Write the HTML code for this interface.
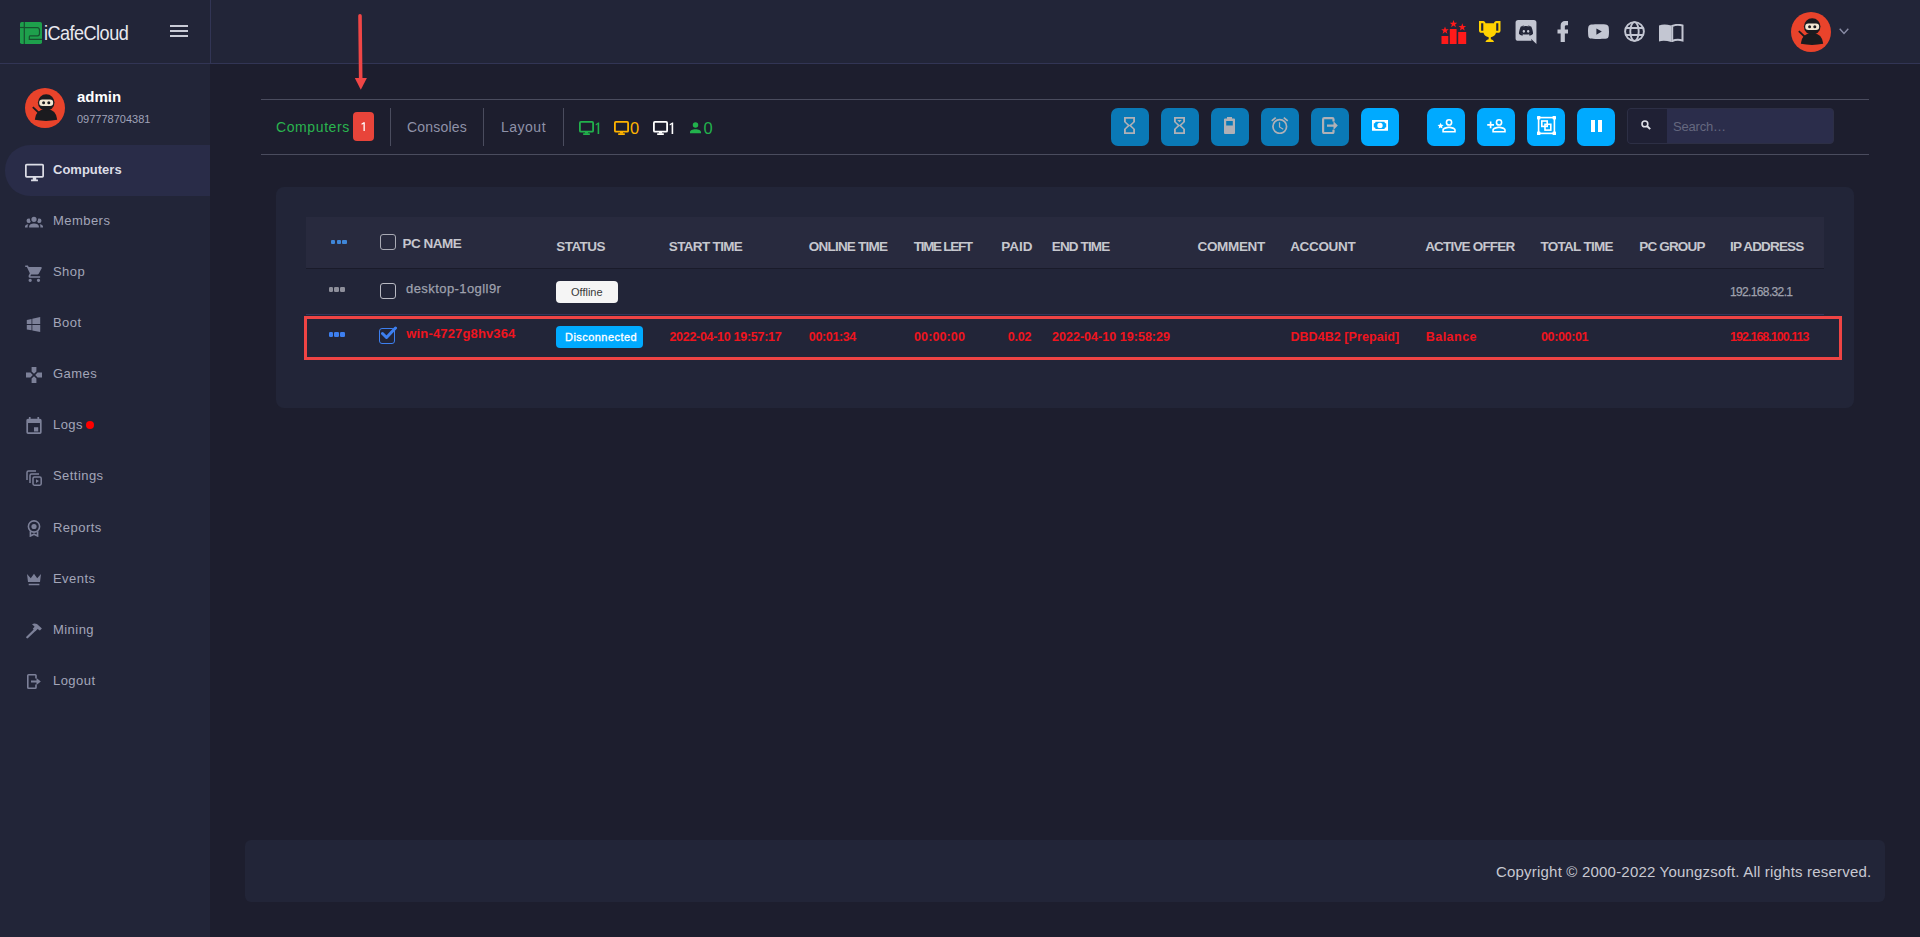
<!DOCTYPE html>
<html><head><meta charset="utf-8">
<style>
*{margin:0;padding:0;box-sizing:border-box}
html,body{width:1920px;height:937px;overflow:hidden;background:#1d1e2e;font-family:"Liberation Sans",sans-serif}
.a{position:absolute}
.t{position:absolute;white-space:nowrap;line-height:1}
#hdr{left:0;top:0;width:1920px;height:64px;background:#222538;border-bottom:1px solid #323555}
#side{left:0;top:64px;width:210px;height:873px;background:#222538}
#vline{left:210px;top:0;width:1px;height:64px;background:#323555}
.mi{left:53px;font-size:13px;color:#a3a6b9;letter-spacing:0.45px}
</style></head><body>
<div id="hdr" class="a"></div>
<div id="vline" class="a"></div>
<div id="side" class="a"></div>
<!-- logo -->
<svg class="a" style="left:20px;top:22px" width="22" height="22" viewBox="0 0 22 22">
<rect x="0" y="0" width="22" height="22" rx="1.8" fill="#1ea04c"/>
<g fill="none" stroke="#17502f" stroke-width="1.2">
<path d="M4.3,0V22"/><path d="M0,5.5H4.3"/>
<path d="M4.3,5.6H17.5Q19.5,5.6 19.5,8.5V11.5Q19.5,13.8 17.5,13.8H10Q9.3,13.8 9.3,15V17.4H22"/>
</g></svg>
<div class="t" style="left:44px;top:22px;font-size:21px;color:#e9e9ef;letter-spacing:-0.6px;transform:scaleX(0.86);transform-origin:left">iCafeCloud</div>
<!-- hamburger -->
<div class="a" style="left:170px;top:25.1px;width:18px;height:1.6px;background:#c9cbd6"></div>
<div class="a" style="left:170px;top:30.1px;width:18px;height:1.6px;background:#c9cbd6"></div>
<div class="a" style="left:170px;top:35.1px;width:18px;height:1.6px;background:#c9cbd6"></div>

<!-- admin avatar -->
<svg class="a" style="left:25px;top:88px" width="40" height="40" viewBox="0 0 40 40">
<circle cx="20" cy="20" r="20" fill="#e9432b"/>
<path d="M9.8,31.8 Q10.5,21.5 21.2,21 Q31.5,21.5 32.2,31.8 Q21,34 9.8,31.8Z" fill="#1b1b1f"/>
<circle cx="21.2" cy="14.5" r="8.3" fill="#1b1b1f"/>
<rect x="14.2" y="11.6" width="14" height="6.4" rx="3.2" fill="#f1e6d2"/>
<circle cx="18.6" cy="14.8" r="1.5" fill="#1b1b1f"/><circle cx="23.8" cy="14.8" r="1.5" fill="#1b1b1f"/>
<path d="M7.8,19.2 L13.5,24.5" stroke="#1b1b1f" stroke-width="1.8"/>
</svg>
<div class="t" style="left:77px;top:89px;font-size:15px;font-weight:bold;color:#ffffff">admin</div>
<div class="t" style="left:77px;top:114px;font-size:11px;color:#a0a3b8">097778704381</div>

<!-- active menu -->
<div class="a" style="left:5px;top:145px;width:205px;height:51px;background:#292c48;border-radius:25px 0 0 25px"></div>
<!-- menu icons -->
<svg class="a" style="left:25px;top:163px" width="19" height="19" viewBox="1 1 22 22"><path fill="#dcdde6" d="M21,16H3V4H21M21,2H3C1.89,2 1,2.89 1,4V16A2,2 0 0,0 3,18H10V20H8V22H16V20H14V18H21A2,2 0 0,0 23,16V4C23,2.89 22.1,2 21,2Z"/></svg>
<svg class="a" style="left:25px;top:214.4px" width="18" height="18" viewBox="0 2 24 24"><path fill="#7d8199" d="M12,5.5A3.5,3.5 0 0,1 15.5,9A3.5,3.5 0 0,1 12,12.5A3.5,3.5 0 0,1 8.5,9A3.5,3.5 0 0,1 12,5.5M5,8C5.56,8 6.08,8.15 6.53,8.42C6.38,9.85 6.8,11.27 7.66,12.38C7.16,13.34 6.16,14 5,14A3,3 0 0,1 2,11A3,3 0 0,1 5,8M19,8A3,3 0 0,1 22,11A3,3 0 0,1 19,14C17.84,14 16.84,13.34 16.34,12.38C17.2,11.27 17.62,9.85 17.47,8.42C17.92,8.15 18.44,8 19,8M5.5,18.25C5.5,16.18 8.41,14.5 12,14.5C15.59,14.5 18.5,16.18 18.5,18.25V20H5.5V18.25M0,20V18.5C0,17.11 1.89,15.94 4.45,15.6C3.86,16.28 3.5,17.22 3.5,18.25V20H0M24,20H20.5V18.25C20.5,17.22 20.14,16.28 19.55,15.6C22.11,15.94 24,17.11 24,18.5V20Z"/></svg>
<svg class="a" style="left:25px;top:265px" width="17" height="17" viewBox="1 1.5 20 20.5"><path fill="#7d8199" d="M17,18C15.89,18 15,18.89 15,20A2,2 0 0,0 17,22A2,2 0 0,0 19,20C19,18.89 18.1,18 17,18M1,2V4H3L6.6,11.59L5.24,14.04C5.09,14.32 5,14.65 5,15A2,2 0 0,0 7,17H19V15H7.42A0.25,0.25 0 0,1 7.17,14.75C7.17,14.7 7.18,14.66 7.2,14.63L8.1,13H15.55C16.3,13 16.96,12.58 17.3,11.97L20.88,5.5C20.95,5.34 21,5.17 21,5A1,1 0 0,0 20,4H5.21L4.27,2M7,18C5.89,18 5,18.89 5,20A2,2 0 0,0 7,22A2,2 0 0,0 9,20C9,18.89 8.1,18 7,18Z"/></svg>
<svg class="a" style="left:26px;top:317px" width="15" height="15" viewBox="3 3 17 19"><path fill="#7d8199" d="M3,12V6.75L9,5.43V11.91L3,12M20,3V11.75L10,11.9V5.21L20,3M3,13L9,13.09V19.9L3,18.75V13M20,13.25V22L10,20.09V13.1L20,13.25Z"/></svg>
<svg class="a" style="left:26px;top:367px" width="16" height="16" viewBox="2 2 20 20"><path fill="#7d8199" d="M16.5,9L13.5,12L16.5,15H22V9M9,16.5V22H15V16.5L12,13.5M7.5,9H2V15H7.5L10.5,12M15,7.5V2H9V7.5L12,10.5L15,7.5Z"/></svg>
<svg class="a" style="left:26px;top:417px" width="16" height="17" viewBox="3 1 18 20"><path fill="#7d8199" d="M12,13H17V18H12M19,19H5V8H19M19,3H18V1H16V3H8V1H6V3H5C3.89,3 3,3.9 3,5V19A2,2 0 0,0 5,21H19A2,2 0 0,0 21,19V5A2,2 0 0,0 19,3Z"/></svg>
<div class="a" style="left:86px;top:421px;width:8px;height:8px;border-radius:50%;background:#ff0000"></div>
<svg class="a" style="left:26px;top:470px" width="16" height="16" viewBox="0 0 16 16"><g fill="none" stroke="#7d8199" stroke-width="1.5"><path d="M1,10V2.5Q1,1 2.5,1H10"/><path d="M4,13V5.5Q4,4 5.5,4H13"/><rect x="7" y="7" width="8.2" height="8.2" rx="1.4"/></g><path d="M10,9.2L13,11.1L10,13Z" fill="#7d8199"/></svg>
<svg class="a" style="left:27px;top:520px" width="14" height="17" viewBox="0 0 14 17"><g fill="none" stroke="#7d8199" stroke-width="1.6"><circle cx="7" cy="6.5" r="5.6"/><path d="M3.4,11.2V16L7,14.2L10.6,16V11.2"/></g><circle cx="7" cy="6.5" r="2.6" fill="#7d8199"/></svg>
<svg class="a" style="left:26px;top:573px" width="16" height="13" viewBox="0 0 16 13"><path fill="#7d8199" d="M1,1L4.8,5.2L8,0.8L11.2,5.2L15,1L14,9H2Z M2.7,10.7H13.4V12.2H2.7Z"/></svg>
<svg class="a" style="left:26px;top:623px" width="17" height="16" viewBox="0 0 17 16"><path d="M1.3,14.3L9.2,6.6" stroke="#7d8199" stroke-width="2.2" stroke-linecap="round"/><path fill="#7d8199" d="M6,1.2Q10,-0.6 13.2,3L15.9,5.6L13.9,7.6L11.6,6L9.3,8.3L6.8,5.8L8.6,3.8Q7.6,2.3 6,1.2Z"/></svg>
<svg class="a" style="left:27px;top:674px" width="14" height="15" viewBox="0 0 14 15"><g fill="none" stroke="#7d8199" stroke-width="1.6"><path d="M9,4.5V1.5Q9,0.8 8.2,0.8H1.6Q0.8,0.8 0.8,1.6V13.4Q0.8,14.2 1.6,14.2H8.2Q9,14.2 9,13.4V10.5"/></g><path fill="#7d8199" d="M4,6.6H9.5V4L13.8,7.5L9.5,11V8.4H4Z"/></svg>

<div class="mi t" style="top:163px;color:#dcdde6;font-weight:bold;letter-spacing:0">Computers</div>
<div class="mi t" style="top:214px">Members</div>
<div class="mi t" style="top:265px">Shop</div>
<div class="mi t" style="top:316px">Boot</div>
<div class="mi t" style="top:367px">Games</div>
<div class="mi t" style="top:418px">Logs</div>
<div class="mi t" style="top:469px">Settings</div>
<div class="mi t" style="top:521px">Reports</div>
<div class="mi t" style="top:572px">Events</div>
<div class="mi t" style="top:623px">Mining</div>
<div class="mi t" style="top:674px">Logout</div>
<!-- toolbar lines -->
<div class="a" style="left:261px;top:99px;width:1608px;height:1px;background:#4a4c5e"></div>
<div class="a" style="left:261px;top:154px;width:1608px;height:1px;background:#4a4c5e"></div>

<!-- card -->
<div class="a" style="left:276px;top:187px;width:1578px;height:221px;background:#222538;border-radius:8px"></div>
<div class="a" style="left:306px;top:217px;width:1518px;height:52px;background:#282a3e;border-bottom:1px solid #1a1b2a"></div>
<div class="a" style="left:306px;top:314px;width:1518px;height:1px;background:#33365a"></div>
<div class="a" style="left:304px;top:316px;width:1538px;height:44px;border:3px solid #ef4444"></div>

<!-- footer -->
<div class="a" style="left:245px;top:840px;width:1640px;height:62px;background:#222538;border-radius:6px"></div>
<div class="t" id="foot" style="left:1496px;top:864px;font-size:15px;color:#c8c9d2;letter-spacing:0.2px">Copyright © 2000-2022 Youngzsoft. All rights reserved.</div>
<!-- annotation arrow -->
<svg class="a" style="left:350px;top:8px" width="22" height="86" viewBox="350 8 22 86"><path d="M360,15.8L360.7,79" stroke="#f04646" stroke-width="3.6" stroke-linecap="round" fill="none"/><path d="M354.8,78H366.9L360.8,89.8Z" fill="#f04646"/></svg>
<!-- header right icons -->
<svg class="a" style="left:1441px;top:20px" width="26" height="24" viewBox="0 0 26 24">
<g fill="#ff1a1a">
<rect x="0.5" y="16" width="6.8" height="8"/><rect x="8.8" y="9" width="6.8" height="15"/><rect x="17.2" y="12" width="8" height="12"/>
<path d="M4,6.5L5,9.2L7.8,9.3L5.6,11L6.4,13.7L4,12.1L1.6,13.7L2.4,11L0.2,9.3L3,9.2Z"/>
<path d="M12.5,0L13.5,2.7L16.3,2.8L14.1,4.5L14.9,7.2L12.5,5.6L10.1,7.2L10.9,4.5L8.7,2.8L11.5,2.7Z"/>
<path d="M21.3,3.3L22.3,6L25.1,6.1L22.9,7.8L23.7,10.5L21.3,8.9L18.9,10.5L19.7,7.8L17.5,6.1L20.3,6Z"/>
</g></svg>
<svg class="a" style="left:1479px;top:20.5px" width="21.5" height="21.5" viewBox="2 2 20 20"><path fill="#ffd200" d="M18 2C17.1 2 16 3 16 4H8C8 3 6.9 2 6 2H2V11C2 12 3 13 4 13H6.2C6.6 15 7.9 16.7 11 17V19.08C8 19.54 8 22 8 22H16C16 22 16 19.54 13 19.08V17C16.1 16.7 17.4 15 17.8 13H20C21 13 22 12 22 11V2H18M6 11H4V4H6V11M20 11H18V4H20V11Z"/></svg>
<svg class="a" style="left:1515px;top:20px" width="22" height="24" viewBox="2 1 20 23"><path fill="#c3c6d2" d="M22,24L16.75,19L17.38,21H4.5A2.5,2.5 0 0,1 2,18.5V3.5A2.5,2.5 0 0,1 4.5,1H19.5A2.5,2.5 0 0,1 22,3.5V24M12,6.8C9.32,6.8 7.44,7.95 7.44,7.95C8.47,7.03 10.27,6.5 10.27,6.5L10.1,6.33C8.41,6.36 6.88,7.53 6.88,7.53C5.16,11.12 5.27,14.22 5.27,14.22C6.670,16.03 8.75,15.9 8.75,15.9L9.46,15C8.21,14.73 7.42,13.62 7.42,13.62C7.42,13.62 9.3,14.9 12,14.9C14.7,14.9 16.58,13.62 16.58,13.62C16.58,13.62 15.79,14.73 14.54,15L15.25,15.9C15.25,15.9 17.33,16.03 18.73,14.22C18.73,14.22 18.84,11.12 17.12,7.53C17.12,7.53 15.59,6.36 13.9,6.33L13.73,6.5C13.73,6.5 15.53,7.03 16.56,7.95C16.56,7.950 14.68,6.8 12,6.8M9.93,10.59C10.58,10.59 11.11,11.16 11.1,11.86C11.1,12.55 10.58,13.13 9.93,13.13C9.29,13.13 8.77,12.55 8.77,11.86C8.77,11.16 9.28,10.59 9.93,10.59M14.1,10.59C14.75,10.59 15.27,11.16 15.27,11.86C15.27,12.55 14.75,13.13 14.1,13.13C13.46,13.13 12.94,12.55 12.94,11.86C12.94,11.16 13.46,10.59 14.1,10.59Z"/></svg>
<svg class="a" style="left:1556.5px;top:21px" width="11.5" height="21" viewBox="7 2 10 20"><path fill="#c3c6d2" d="M17,2V6H15C14.31,6 14,6.81 14,7.5V10H17V14H14V22H10V14H7V10H10V6A4,4 0 0,1 14,2H17Z"/></svg>
<svg class="a" style="left:1588px;top:24px" width="21" height="15.2" viewBox="2 5 20 14"><path fill="#c3c6d2" d="M10,15L15.19,12L10,9V15M21.56,7.17C21.69,7.640 21.78,8.27 21.84,9.07C21.91,9.87 21.94,10.56 21.94,11.16L22,12C22,14.19 21.84,15.8 21.56,16.83C21.31,17.73 20.73,18.31 19.83,18.56C19.36,18.69 18.5,18.78 17.18,18.84C15.88,18.91 14.69,18.94 13.59,18.94L12,19C7.81,19 5.2,18.84 4.17,18.56C3.27,18.31 2.69,17.73 2.44,16.83C2.31,16.36 2.22,15.73 2.16,14.93C2.09,14.13 2.06,13.44 2.06,12.84L2,12C2,9.81 2.16,8.2 2.44,7.17C2.69,6.27 3.27,5.69 4.17,5.44C4.64,5.31 5.5,5.22 6.82,5.16C8.12,5.09 9.31,5.06 10.41,5.06L12,5C16.19,5 18.8,5.16 19.83,5.44C20.73,5.69 21.31,6.27 21.56,7.17Z"/></svg>
<svg class="a" style="left:1624px;top:21px" width="21" height="21" viewBox="0 0 21 21"><g fill="none" stroke="#c3c6d2" stroke-width="1.9"><circle cx="10.5" cy="10.5" r="9.4"/><ellipse cx="10.5" cy="10.5" rx="4.2" ry="9.4"/><path d="M1.5,7H19.5M1.5,14H19.5"/></g></svg>
<svg class="a" style="left:1659px;top:23.5px" width="24.5" height="18" viewBox="0 0 24.5 18"><path fill="#c3c6d2" d="M0,1.5Q5,-0.5 12.2,1.5V18Q5,16 0,17.5Z"/><path fill="none" stroke="#c3c6d2" stroke-width="2" d="M13.2,2Q18,0 23.5,1.5V16.5Q18,15 13.2,17Z"/></svg>
<!-- right avatar -->
<svg class="a" style="left:1791px;top:12px" width="40" height="40" viewBox="0 0 40 40">
<circle cx="20" cy="20" r="20" fill="#e9432b"/>
<path d="M9.8,31.8 Q10.5,21.5 21.2,21 Q31.5,21.5 32.2,31.8 Q21,34 9.8,31.8Z" fill="#1b1b1f"/>
<circle cx="21.2" cy="14.5" r="8.3" fill="#1b1b1f"/>
<rect x="14.2" y="11.6" width="14" height="6.4" rx="3.2" fill="#f1e6d2"/>
<circle cx="18.6" cy="14.8" r="1.5" fill="#1b1b1f"/><circle cx="23.8" cy="14.8" r="1.5" fill="#1b1b1f"/>
<path d="M7.8,19.2 L13.5,24.5" stroke="#1b1b1f" stroke-width="1.8"/>
</svg>
<svg class="a" style="left:1839px;top:28px" width="10" height="7" viewBox="0 0 10 7"><path d="M0.7,0.8L5,5.4L9.3,0.8" fill="none" stroke="#8a8da6" stroke-width="1.4"/></svg>
<!-- tabs -->
<div class="t" style="left:276px;top:119.5px;font-size:14px;color:#2ab44e;letter-spacing:0.6px">Computers</div>
<div class="a" style="left:353px;top:112px;width:21px;height:29px;background:#e8443a;border-radius:4px"></div>
<svg class="a" style="left:360.5px;top:122px" width="4.5" height="9.3" viewBox="0 0 4.5 9.3"><path d="M0.3,1.7L2.6,0.2H3.8V9.3H2.5V1.8L0.8,2.8Z" fill="#fff"/></svg>
<div class="a" style="left:390px;top:108px;width:1px;height:38px;background:#4a4c5e"></div>
<div class="t" style="left:407px;top:119.5px;font-size:14px;color:#8f92a8;letter-spacing:0.2px">Consoles</div>
<div class="a" style="left:483px;top:108px;width:1px;height:38px;background:#4a4c5e"></div>
<div class="t" style="left:501px;top:119.5px;font-size:14px;color:#8f92a8;letter-spacing:0.5px">Layout</div>
<div class="a" style="left:563px;top:108px;width:1px;height:38px;background:#4a4c5e"></div>
<!-- status icons -->
<svg class="a" style="left:579px;top:121px" width="15" height="14" viewBox="0 0 15 14"><rect x="0.9" y="0.9" width="13.2" height="9.8" rx="1" fill="none" stroke="#22b24c" stroke-width="1.8"/><rect x="6" y="10.5" width="3" height="2" fill="#22b24c"/><rect x="4" y="12.3" width="7" height="1.7" rx="0.8" fill="#22b24c"/></svg>
<svg class="a" style="left:595px;top:122px" width="5" height="12" viewBox="0 0 5 12"><path d="M0.6,2.2L3.2,0.4H4.2V12H2.6V2.3L0.9,3.4Z" fill="#22b24c"/></svg>
<svg class="a" style="left:614px;top:121px" width="15" height="14" viewBox="0 0 15 14"><rect x="0.9" y="0.9" width="13.2" height="9.8" rx="1" fill="none" stroke="#ffb300" stroke-width="1.8"/><rect x="6" y="10.5" width="3" height="2" fill="#ffb300"/><rect x="4" y="12.3" width="7" height="1.7" rx="0.8" fill="#ffb300"/></svg>
<div class="t" style="left:630px;top:120px;font-size:16.5px;color:#ffb300">0</div>
<svg class="a" style="left:653px;top:121px" width="15" height="14" viewBox="0 0 15 14"><rect x="0.9" y="0.9" width="13.2" height="9.8" rx="1" fill="none" stroke="#ffffff" stroke-width="1.8"/><rect x="6" y="10.5" width="3" height="2" fill="#ffffff"/><rect x="4" y="12.3" width="7" height="1.7" rx="0.8" fill="#ffffff"/></svg>
<svg class="a" style="left:668.5px;top:122px" width="5" height="12" viewBox="0 0 5 12"><path d="M0.6,2.2L3.2,0.4H4.2V12H2.6V2.3L0.9,3.4Z" fill="#ffffff"/></svg>
<svg class="a" style="left:690px;top:122px" width="11" height="11.5" viewBox="4 4 16 16"><path fill="#22b24c" d="M12,4A4,4 0 0,1 16,8A4,4 0 0,1 12,12A4,4 0 0,1 8,8A4,4 0 0,1 12,4M12,14C16.42,14 20,15.79 20,18V20H4V18C4,15.79 7.580,14 12,14Z"/></svg>
<div class="t" style="left:703.5px;top:120px;font-size:16.5px;color:#22b24c">0</div>

<!-- buttons (disabled, opacity) -->
<div class="a" style="left:1111px;top:108px;width:38px;height:38px;border-radius:7px;background:#00aaff;opacity:0.65">
 <svg class="a" style="left:13px;top:9px" width="11" height="17" viewBox="6 2 12 20" preserveAspectRatio="none"><path fill="#fff" d="M6,2V8L10,12L6,16V22H18V16L14,12L18,8V2H6M16,16.5V20H8V16.5L12,12.5L16,16.5M12,11.5L8,7.5V4H16V7.5L12,11.5Z"/></svg>
</div>
<div class="a" style="left:1161px;top:108px;width:38px;height:38px;border-radius:7px;background:#00aaff;opacity:0.65">
 <svg class="a" style="left:13px;top:9px" width="11" height="17" viewBox="6 2 12 20" preserveAspectRatio="none"><path fill="#fff" d="M6,2V8L10,12L6,16V22H18V16L14,12L18,8V2H6M16,16.5V20H8V16.5L12,12.5L16,16.5M12,11.5L8,7.5V4H16V7.5L12,11.5Z"/><path fill="#fff" d="M9.5,5.5H14.5L12,8.3Z"/></svg>
</div>
<div class="a" style="left:1211px;top:108px;width:38px;height:38px;border-radius:7px;background:#00aaff;opacity:0.65">
 <svg class="a" style="left:13px;top:9px" width="11" height="17" viewBox="0 0 11 17"><rect x="3" y="0" width="5" height="2" fill="#fff"/><path fill="#fff" d="M1,1.5H10Q11,1.5 11,2.5V16Q11,17 10,17H1Q0,17 0,16V2.5Q0,1.5 1,1.5ZM2.2,4V8.5H8.8V4Z"/></svg>
</div>
<div class="a" style="left:1261px;top:108px;width:38px;height:38px;border-radius:7px;background:#00aaff;opacity:0.65">
 <svg class="a" style="left:10px;top:9px" width="17.5" height="17.2" viewBox="2 1.86 20 20.14"><path fill="#fff" d="M12,20A7,7 0 0,1 5,13A7,7 0 0,1 12,6A7,7 0 0,1 19,13A7,7 0 0,1 12,20M12,4A9,9 0 0,0 3,13A9,9 0 0,0 12,22A9,9 0 0,0 21,13A9,9 0 0,0 12,4M12.5,8H11V14L15.75,16.85L16.5,15.62L12.5,13.25V8M7.88,3.39L6.6,1.86L2,5.71L3.29,7.24L7.88,3.39M22,5.72L17.4,1.86L16.11,3.39L20.71,7.25L22,5.72Z"/></svg>
</div>
<div class="a" style="left:1311px;top:108px;width:38px;height:38px;border-radius:7px;background:#00aaff;opacity:0.65">
 <svg class="a" style="left:11px;top:9px" width="16" height="17.2" viewBox="0 0 16 17.2"><path fill="none" stroke="#fff" stroke-width="2.2" d="M11.5,4.5V2.3Q11.5,1.1 10.3,1.1H2.3Q1.1,1.1 1.1,2.3V14.9Q1.1,16.1 2.3,16.1H10.3Q11.5,16.1 11.5,14.9V12.7"/><path fill="#fff" d="M5,7.4H11.5V4.2L15.8,8.6L11.5,13V9.8H5Z"/></svg>
</div>
<div class="a" style="left:1361px;top:108px;width:38px;height:38px;border-radius:7px;background:#00aaff">
 <svg class="a" style="left:11px;top:12px" width="16" height="10.8" viewBox="3 6 18 12"><path fill="#fff" d="M3,6H21V18H3V6M12,9A3,3 0 0,1 15,12A3,3 0 0,1 12,15A3,3 0 0,1 9,12A3,3 0 0,1 12,9M7,8A2,2 0 0,1 5,10V14A2,2 0 0,1 7,16H17A2,2 0 0,1 19,14V10A2,2 0 0,1 17,8H7Z"/></svg>
</div>
<div class="a" style="left:1427px;top:108px;width:38px;height:38px;border-radius:7px;background:#00aaff">
 <svg class="a" style="left:10px;top:11px" width="19" height="13.5" viewBox="1 4 22 16"><path fill="#fff" d="M15,4A4,4 0 0,0 11,8A4,4 0 0,0 15,12A4,4 0 0,0 19,8A4,4 0 0,0 15,4M15,5.9C16.16,5.9 17.1,6.84 17.1,8C17.1,9.16 16.16,10.1 15,10.1A2.1,2.1 0 0,1 12.9,8A2.1,2.1 0 0,1 15,5.9M15,13C12.33,13 7,14.33 7,17V20H23V17C23,14.33 17.67,13 15,13M15,14.9C18,14.9 21.1,16.36 21.1,17V18.1H8.9V17C8.9,16.360 12,14.9 15,14.9Z"/><path fill="#fff" d="M5,8.5L6.1,10.9L8.6,11.1L6.7,12.8L7.3,15.3L5,14L2.7,15.3L3.3,12.8L1.4,11.1L3.9,10.9Z"/></svg>
</div>
<div class="a" style="left:1477px;top:108px;width:38px;height:38px;border-radius:7px;background:#00aaff">
 <svg class="a" style="left:10px;top:11px" width="19" height="13.5" viewBox="1 4 22 16"><path fill="#fff" d="M15,4A4,4 0 0,0 11,8A4,4 0 0,0 15,12A4,4 0 0,0 19,8A4,4 0 0,0 15,4M15,5.9C16.16,5.9 17.1,6.84 17.1,8C17.1,9.16 16.16,10.1 15,10.1A2.1,2.1 0 0,1 12.9,8A2.1,2.1 0 0,1 15,5.9M4,7V10H1V12H4V15H6V12H9V10H6V7H4M15,13C12.33,13 7,14.33 7,17V20H23V17C23,14.33 17.67,13 15,13M15,14.9C18,14.9 21.1,16.36 21.1,17V18.1H8.9V17C8.9,16.36 12,14.9 15,14.9Z"/></svg>
</div>
<div class="a" style="left:1527px;top:108px;width:38px;height:38px;border-radius:7px;background:#00aaff">
 <svg class="a" style="left:10px;top:8px" width="19" height="19" viewBox="0 0 19 19"><g fill="none" stroke="#fff" stroke-width="1.6"><rect x="1.6" y="1.6" width="15.8" height="15.8"/><rect x="4.8" y="5" width="5.4" height="5.4"/><rect x="8" y="8.3" width="5.8" height="5.8"/></g><g fill="#fff"><rect x="0" y="0" width="3.4" height="3.4" rx="0.6"/><rect x="15.6" y="0" width="3.4" height="3.4" rx="0.6"/><rect x="0" y="15.6" width="3.4" height="3.4" rx="0.6"/><rect x="15.6" y="15.6" width="3.4" height="3.4" rx="0.6"/></g></svg>
</div>
<div class="a" style="left:1577px;top:108px;width:38px;height:38px;border-radius:7px;background:#00aaff">
 <div class="a" style="left:14px;top:11.5px;width:3.6px;height:12.5px;background:#fff"></div>
 <div class="a" style="left:21px;top:11.5px;width:3.6px;height:12.5px;background:#fff"></div>
</div>
<!-- search -->
<div class="a" style="left:1627px;top:108px;width:207px;height:36px;border:1px solid #2d2f45;border-radius:4px;background:#2b2d4b;overflow:hidden">
 <div class="a" style="left:0;top:0;width:39px;height:34px;background:#1f2034"></div>
</div>
<svg class="a" style="left:1641px;top:120px" width="10" height="10" viewBox="0 0 10 10"><circle cx="3.9" cy="3.9" r="2.9" fill="none" stroke="#dfe0e8" stroke-width="1.6"/><path d="M6,6L9.2,9.2" stroke="#dfe0e8" stroke-width="1.9"/></svg>
<div class="t" style="left:1673px;top:120px;font-size:13px;color:#65687f;letter-spacing:-0.2px">Search…</div>
<!-- header dots + checkbox -->
<div class="a" style="left:330.5px;top:240px;width:4.5px;height:4.3px;border-radius:1px;background:#3f86d8"></div>
<div class="a" style="left:336.5px;top:240px;width:4.5px;height:4.3px;border-radius:1px;background:#3f86d8"></div>
<div class="a" style="left:342.3px;top:240px;width:4.5px;height:4.3px;border-radius:1px;background:#3f86d8"></div>
<div class="a" style="left:380px;top:234px;width:16px;height:16px;border:1.5px solid #a9aab4;border-radius:3px"></div>
<!-- row1 -->
<div class="a" style="left:328.5px;top:287px;width:4.6px;height:5px;border-radius:1.2px;background:#8e8f9b"></div>
<div class="a" style="left:334.3px;top:287px;width:4.6px;height:5px;border-radius:1.2px;background:#8e8f9b"></div>
<div class="a" style="left:340px;top:287px;width:4.6px;height:5px;border-radius:1.2px;background:#8e8f9b"></div>
<div class="a" style="left:380.3px;top:283px;width:16px;height:16px;border:1.5px solid #b8b9c2;border-radius:3px"></div>
<div class="a" style="left:556px;top:281px;width:62px;height:22px;border-radius:4px;background:#f5f5f5"></div>
<div class="t" style="left:571px;top:287px;font-size:11px;color:#3a3a3a">Offline</div>
<!-- row2 -->
<div class="a" style="left:328.5px;top:332px;width:4.6px;height:5px;border-radius:1.2px;background:#3d7ff0"></div>
<div class="a" style="left:334.3px;top:332px;width:4.6px;height:5px;border-radius:1.2px;background:#3d7ff0"></div>
<div class="a" style="left:340px;top:332px;width:4.6px;height:5px;border-radius:1.2px;background:#3d7ff0"></div>
<div class="a" style="left:378.5px;top:328px;width:16px;height:16px;border:1.6px solid #3d7ff0;border-radius:3px"></div>
<svg class="a" style="left:381px;top:326px" width="16" height="14" viewBox="0 0 16 14"><path d="M1.5,7.5L5.5,11.5L14.5,2" fill="none" stroke="#3d7ff0" stroke-width="3" stroke-linecap="round" stroke-linejoin="round"/></svg>
<div class="a" style="left:556px;top:326px;width:87px;height:22px;border-radius:4px;background:#00aaff"></div>
<div class="t" style="left:565px;top:331.5px;font-size:11px;color:#ffffff;letter-spacing:0.45px;-webkit-text-stroke:0.3px #fff">Disconnected</div>
<div class="t tb" id="tb0" style="left:402.5px;top:237.0px;font-size:13.5px;font-weight:bold;color:#c6c7ce;letter-spacing:-0.48px">PC NAME</div>
<div class="t tb" id="tb1" style="left:556.2px;top:239.5px;font-size:13.5px;font-weight:bold;color:#c6c7ce;letter-spacing:-0.52px">STATUS</div>
<div class="t tb" id="tb2" style="left:668.8px;top:239.5px;font-size:13.5px;font-weight:bold;color:#c6c7ce;letter-spacing:-0.66px">START TIME</div>
<div class="t tb" id="tb3" style="left:808.8px;top:239.5px;font-size:13.5px;font-weight:bold;color:#c6c7ce;letter-spacing:-0.79px">ONLINE TIME</div>
<div class="t tb" id="tb4" style="left:913.8px;top:239.5px;font-size:13.5px;font-weight:bold;color:#c6c7ce;letter-spacing:-1.31px">TIME LEFT</div>
<div class="t tb" id="tb5" style="left:1001.2px;top:239.5px;font-size:13.5px;font-weight:bold;color:#c6c7ce;letter-spacing:0.00px">PAID</div>
<div class="t tb" id="tb6" style="left:1051.8px;top:239.5px;font-size:13.5px;font-weight:bold;color:#c6c7ce;letter-spacing:-0.87px">END TIME</div>
<div class="t tb" id="tb7" style="left:1197.5px;top:239.5px;font-size:13.5px;font-weight:bold;color:#c6c7ce;letter-spacing:-0.33px">COMMENT</div>
<div class="t tb" id="tb8" style="left:1290.2px;top:239.5px;font-size:13.5px;font-weight:bold;color:#c6c7ce;letter-spacing:-0.33px">ACCOUNT</div>
<div class="t tb" id="tb9" style="left:1425.2px;top:239.5px;font-size:13.5px;font-weight:bold;color:#c6c7ce;letter-spacing:-0.82px">ACTIVE OFFER</div>
<div class="t tb" id="tb10" style="left:1540.5px;top:239.5px;font-size:13.5px;font-weight:bold;color:#c6c7ce;letter-spacing:-0.72px">TOTAL TIME</div>
<div class="t tb" id="tb11" style="left:1639.3px;top:239.5px;font-size:13.5px;font-weight:bold;color:#c6c7ce;letter-spacing:-0.84px">PC GROUP</div>
<div class="t tb" id="tb12" style="left:1730.0px;top:239.5px;font-size:13.5px;font-weight:bold;color:#c6c7ce;letter-spacing:-0.83px">IP ADDRESS</div>
<div class="t tb" id="tb13" style="left:406.0px;top:282.1px;font-size:13px;font-weight:normal;color:#9fa1ad;letter-spacing:0.43px;-webkit-text-stroke:0.25px #9fa1ad">desktop-1ogll9r</div>
<div class="t tb" id="tb14" style="left:1730.0px;top:285.9px;font-size:12px;font-weight:normal;color:#9fa1ad;letter-spacing:-0.64px;-webkit-text-stroke:0.25px #9fa1ad">192.168.32.1</div>
<div class="t tb" id="tb15" style="left:406.3px;top:327.2px;font-size:13px;font-weight:bold;color:#f0141e;letter-spacing:0.15px">win-4727g8hv364</div>
<div class="t tb" id="tb16" style="left:669.4px;top:330.7px;font-size:12.5px;font-weight:bold;color:#f0141e;letter-spacing:-0.29px">2022-04-10 19:57:17</div>
<div class="t tb" id="tb17" style="left:808.8px;top:330.7px;font-size:12.5px;font-weight:bold;color:#f0141e;letter-spacing:-0.36px">00:01:34</div>
<div class="t tb" id="tb18" style="left:914.0px;top:330.7px;font-size:12.5px;font-weight:bold;color:#f0141e;letter-spacing:0.12px">00:00:00</div>
<div class="t tb" id="tb19" style="left:1007.7px;top:330.7px;font-size:12.5px;font-weight:bold;color:#f0141e;letter-spacing:-0.17px">0.02</div>
<div class="t tb" id="tb20" style="left:1052.0px;top:330.7px;font-size:12.5px;font-weight:bold;color:#f0141e;letter-spacing:0.03px">2022-04-10 19:58:29</div>
<div class="t tb" id="tb21" style="left:1290.4px;top:330.7px;font-size:12.5px;font-weight:bold;color:#f0141e;letter-spacing:0.07px">DBD4B2 [Prepaid]</div>
<div class="t tb" id="tb22" style="left:1425.7px;top:330.7px;font-size:12.5px;font-weight:bold;color:#f0141e;letter-spacing:0.48px">Balance</div>
<div class="t tb" id="tb23" style="left:1541.0px;top:330.7px;font-size:12.5px;font-weight:bold;color:#f0141e;letter-spacing:-0.36px">00:00:01</div>
<div class="t tb" id="tb24" style="left:1730.0px;top:330.7px;font-size:12.5px;font-weight:bold;color:#f0141e;letter-spacing:-0.98px">192.168.100.113</div>
</body></html>
